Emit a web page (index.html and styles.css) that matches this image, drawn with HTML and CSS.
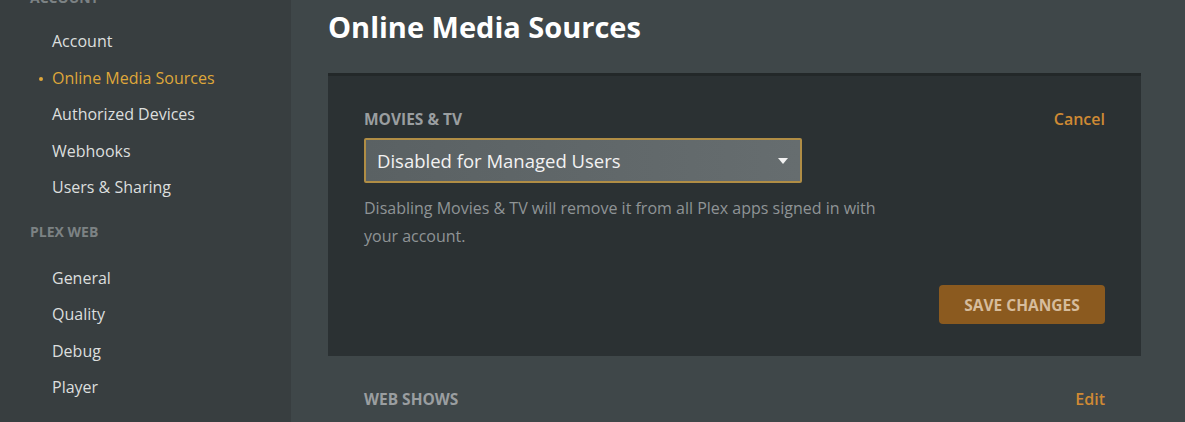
FILE: index.html
```html
<!DOCTYPE html>
<html>
<head>
  <meta charset="UTF-8">
  <title>Online Media Sources</title>
  <link rel="stylesheet" href="styles.css">
</head>
<body>
  <div class="sidebar">
    <div class="section-title first">ACCOUNT</div>
    <ul class="nav">
      <li>Account</li>
      <li class="active">Online Media Sources</li>
      <li>Authorized Devices</li>
      <li>Webhooks</li>
      <li>Users &amp; Sharing</li>
    </ul>
    <div class="section-title">PLEX WEB</div>
    <ul class="nav">
      <li>General</li>
      <li>Quality</li>
      <li>Debug</li>
      <li>Player</li>
    </ul>
  </div>

  <div class="main">
    <h1>Online Media Sources</h1>

    <div class="card">
      <div class="row">
        <span class="label">MOVIES &amp; TV</span>
        <a class="link">Cancel</a>
      </div>
      <div class="select">
        <span>Disabled for Managed Users</span>
        <span class="caret"></span>
      </div>
      <p class="help">Disabling Movies &amp; TV will remove it from all Plex apps signed in with your account.</p>
      <div class="actions">
        <button>SAVE CHANGES</button>
      </div>
    </div>

    <div class="row outside">
      <span class="label">WEB SHOWS</span>
      <a class="link">Edit</a>
    </div>
  </div>
</body>
</html>
```

FILE: styles.css
```css
body {
  margin: 0;
  font-family: "Open Sans", sans-serif;
  background: #3f4749;
  display: flex;
  height: 422px;
  overflow: hidden;
}

.sidebar {
  width: 291px;
  flex-shrink: 0;
  background: #383e40;
  padding-left: 30px;
  box-sizing: border-box;
}

.section-title {
  color: #7c8284;
  font-size: 14px;
  font-weight: bold;
  margin: 16px 0 19px;
}

.section-title.first {
  margin-top: -12px;
  margin-bottom: 16px;
}

.nav {
  list-style: none;
  margin: 0;
  padding: 0 0 0 22px;
}

.nav li {
  color: #dcdede;
  font-size: 16px;
  line-height: 36.5px;
  position: relative;
}

.nav li.active {
  color: #dfa73a;
}

.nav li.active::before {
  content: "";
  position: absolute;
  left: -13px;
  top: 17px;
  width: 4px;
  height: 4px;
  border-radius: 50%;
  background: #dfa73a;
}

.main {
  flex: 1;
  padding: 0 44px 0 37px;
}

h1 {
  color: #fff;
  font-size: 29px;
  font-weight: bold;
  margin: 7px 0 0;
  line-height: 40px;
}

.card {
  margin-top: 26px;
  background: #2b3133;
  border-top: 3px solid #232829;
  padding: 32px 36px 32px;
}

.row {
  display: flex;
  justify-content: space-between;
  align-items: center;
}

.label {
  color: #9a9ea0;
  font-size: 15.5px;
  font-weight: bold;
}

.link {
  color: #cf8a34;
  font-size: 16px;
  font-weight: 600;
}

.select {
  margin-top: 8px;
  width: 438px;
  height: 45px;
  box-sizing: border-box;
  border: 2px solid #b08d45;
  border-radius: 2px;
  background: linear-gradient(to right, #5a6163, #666d6f);
  display: flex;
  align-items: center;
  justify-content: space-between;
  padding: 0 12px 0 11px;
  color: #f2f2f2;
  font-size: 18.5px;
}

.caret {
  width: 0;
  height: 0;
  border-left: 5px solid transparent;
  border-right: 5px solid transparent;
  border-top: 6px solid #f2f2f2;
}

.help {
  color: #8f9496;
  font-size: 16px;
  line-height: 28px;
  width: 530px;
  margin: 11px 0 0;
}

.actions {
  display: flex;
  justify-content: flex-end;
  margin-top: 35px;
}

button {
  background: #8b5a1f;
  color: #d6bc9c;
  border: none;
  border-radius: 4px;
  font-family: "Open Sans", sans-serif;
  font-size: 15.5px;
  font-weight: bold;
  width: 166px;
  height: 39px;
}

.outside {
  padding: 32px 36px 0;
}
```
